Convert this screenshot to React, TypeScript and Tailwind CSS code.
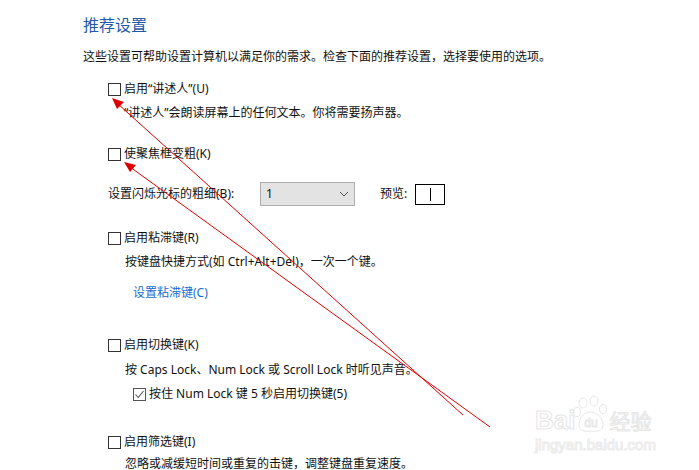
import React from "react";

const font = { fontFamily: '"Noto Sans", "Noto Sans CJK SC", sans-serif' };

function Box({ checked = false }: { checked?: boolean }) {
  return (
    <span
      className={`inline-flex shrink-0 w-[13px] h-[13px] border items-center justify-center bg-white ${
        checked ? "border-[#555]" : "border-[#333]"
      }`}
    >
      {checked && (
        <svg width="11" height="11" viewBox="0 0 11 11">
          <polyline points="1.5,5.5 4.2,8.5 9.5,2" fill="none" stroke="#555" strokeWidth="1.1" />
        </svg>
      )}
    </span>
  );
}

function Check({ label, checked = false, cls = "" }: { label: string; checked?: boolean; cls?: string }) {
  return (
    <div className={`flex items-center h-[20px] ${cls}`}>
      <Box checked={checked} />
      <span className="ml-[3px] text-[12px] leading-[20px] text-[#111]">{label}</span>
    </div>
  );
}

function Desc({ text, cls = "" }: { text: string; cls?: string }) {
  return <div className={`h-[20px] leading-[20px] text-[12px] text-[#111] ${cls}`}>{text}</div>;
}

export default function App() {
  return (
    <div className="relative w-[699px] h-[470px] overflow-hidden bg-white" style={font}>
      <div className="pl-[83px] pt-[13px] flex flex-col">
        <div className="h-[24px] leading-[24px] text-[16px] text-[#2559a8]">推荐设置</div>
        <Desc
          cls="mt-[10px]"
          text="这些设置可帮助设置计算机以满足你的需求。检查下面的推荐设置，选择要使用的选项。"
        />
        <div className="pl-[25px] flex flex-col">
          <Check cls="mt-[12px]" label="启用“讲述人”(U)" />
          <Desc cls="mt-[4px] pl-[16px]" text="“讲述人”会朗读屏幕上的任何文本。你将需要扬声器。" />
          <Check cls="mt-[21px]" label="使聚焦框变粗(K)" />
          <div className="mt-[18px] flex items-center h-[24px]">
            <span className="w-[152px] text-[12px] text-[#111]">设置闪烁光标的粗细(B):</span>
            <div className="w-[95px] h-[24px] bg-[#e3e3e3] border border-[#adadad] flex items-center justify-between pl-[5px] pr-[5px]">
              <span className="text-[12px] text-[#111]">1</span>
              <svg width="10" height="6" viewBox="0 0 10 6">
                <polyline points="1,1 5,5 9,1" fill="none" stroke="#555" strokeWidth="1" />
              </svg>
            </div>
            <span className="ml-[25px] text-[12px] text-[#111]">预览:</span>
            <div className="ml-[8px] w-[30px] h-[21px] border border-black flex items-center justify-center">
              <div className="w-[1px] h-[13px] bg-black" />
            </div>
          </div>
          <Check cls="mt-[22px]" label="启用粘滞键(R)" />
          <Desc cls="mt-[4px] pl-[17px]" text="按键盘快捷方式(如 Ctrl+Alt+Del)，一次一个键。" />
          <div className="mt-[11px] pl-[25px] h-[20px] leading-[20px] text-[12px] text-[#1a6ccf]">设置粘滞键(C)</div>
          <Check cls="mt-[32px]" label="启用切换键(K)" />
          <Desc cls="mt-[5px] pl-[17px]" text="按 Caps Lock、Num Lock 或 Scroll Lock 时听见声音。" />
          <div className="pl-[25px] mt-[4px]">
            <Check checked label="按住 Num Lock 键 5 秒启用切换键(5)" />
          </div>
          <Check cls="mt-[28px]" label="启用筛选键(I)" />
          <Desc cls="mt-[2px] pl-[17px]" text="忽略或减缓短时间或重复的击键，调整键盘重复速度。" />
        </div>
      </div>

      {/* Baidu watermark */}
      <div className="absolute left-[535px] top-[393px] w-[130px] h-[65px] pointer-events-none">
        <div className="flex items-end h-[40px]">
          <span
            className="text-[26px] leading-[26px] font-bold text-transparent [-webkit-text-stroke:1px_#e6e6e6]"
            style={{ fontFamily: '"Liberation Sans", sans-serif' }}
          >
            Bai
          </span>
          <svg width="36" height="38" viewBox="0 0 36 38" className="-ml-[2px]">
            <g fill="none" stroke="#e6e6e6" strokeWidth="1">
              <ellipse cx="10" cy="8" rx="4" ry="5" />
              <ellipse cx="21" cy="6" rx="4" ry="5" />
              <ellipse cx="4" cy="17" rx="3.5" ry="4.5" />
              <ellipse cx="30" cy="14" rx="3.5" ry="4.5" />
              <path d="M6 30 C 6 22, 12 17, 17 17 C 23 17, 30 22, 30 30 C 30 36, 24 37, 18 36 C 12 37, 6 36, 6 30 Z" />
            </g>
            <text x="18" y="32" textAnchor="middle" fontSize="12" fill="none" stroke="#e6e6e6" strokeWidth="0.8" fontFamily="Liberation Sans, sans-serif">du</text>
          </svg>
          <span className="text-[21px] leading-[26px] text-transparent [-webkit-text-stroke:1px_#e6e6e6]" style={{ fontFamily: '"Noto Sans CJK SC", sans-serif' }}>经验</span>
        </div>
        <div
          className="mt-[4px] text-[15px] leading-[16px] text-transparent [-webkit-text-stroke:1px_#ebebeb]"
          style={{ fontFamily: '"Liberation Sans", sans-serif' }}
        >
          jingyan.baidu.com
        </div>
      </div>

      {/* Red annotation arrows */}
      <svg className="absolute left-0 top-0 pointer-events-none" width="699" height="470" viewBox="0 0 699 470">
        <line x1="118" y1="104" x2="463" y2="415" stroke="#e00000" strokeWidth="1" />
        <polygon points="112,98 124,102 117,109" fill="#e00000" />
        <line x1="130" y1="167" x2="490" y2="427" stroke="#e00000" strokeWidth="1" />
        <polygon points="124,162 136,165 130,172" fill="#e00000" />
      </svg>
    </div>
  );
}
